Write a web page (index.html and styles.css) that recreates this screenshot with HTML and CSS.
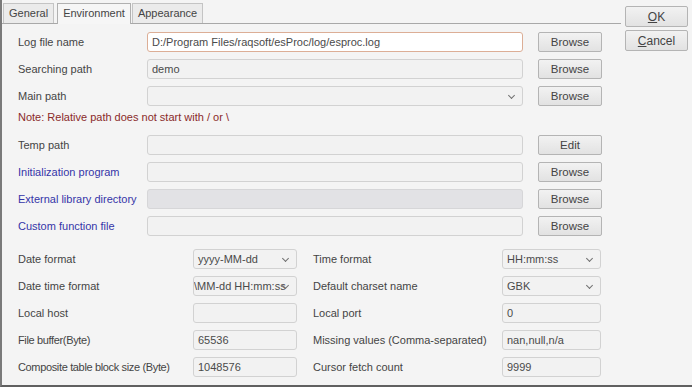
FILE: index.html
```html
<!DOCTYPE html>
<html lang="en">
<head>
  <meta charset="UTF-8" />
  <title>Options</title>
  <link rel="stylesheet" href="styles.css">
</head>
<body>

  <div class="dialog">
    <div class="tabpane">
      <div class="tabs">
        <span class="tab">General</span>
        <span class="tab active">Environment</span>
        <span class="tab">Appearance</span>
      </div>

      <div class="panel">
        <!-- Path settings -->
        <div class="paths">
          <div class="row">
            <label>Log file name</label>
            <div class="field focus">D:/Program Files/raqsoft/esProc/log/esproc.log</div>
            <button class="btn">Browse</button>
          </div>
          <div class="row">
            <label>Searching path</label>
            <div class="field">demo</div>
            <button class="btn">Browse</button>
          </div>
          <div class="row">
            <label>Main path</label>
            <div class="field combo"></div>
            <button class="btn">Browse</button>
          </div>
          <div class="note">Note: Relative path does not start with / or \</div>
          <div class="row">
            <label>Temp path</label>
            <div class="field"></div>
            <button class="btn">Edit</button>
          </div>
          <div class="row">
            <label class="link">Initialization program</label>
            <div class="field"></div>
            <button class="btn">Browse</button>
          </div>
          <div class="row">
            <label class="link">External library directory</label>
            <div class="field disabled"></div>
            <button class="btn">Browse</button>
          </div>
          <div class="row">
            <label class="link">Custom function file</label>
            <div class="field"></div>
            <button class="btn">Browse</button>
          </div>
        </div>

        <!-- Format settings -->
        <div class="formats">
          <label>Date format</label>
          <div class="field combo">yyyy-MM-dd</div>
          <label>Time format</label>
          <div class="field combo">HH:mm:ss</div>

          <label>Date time format</label>
          <div class="field combo clip">\MM-dd HH:mm:ss</div>
          <label>Default charset name</label>
          <div class="field combo">GBK</div>

          <label>Local host</label>
          <div class="field"></div>
          <label>Local port</label>
          <div class="field">0</div>

          <label class="tight">File buffer(Byte)</label>
          <div class="field">65536</div>
          <label>Missing values (Comma-separated)</label>
          <div class="field">nan,null,n/a</div>

          <label class="tight">Composite table block size (Byte)</label>
          <div class="field">1048576</div>
          <label>Cursor fetch count</label>
          <div class="field">9999</div>
        </div>
      </div>
    </div>

    <div class="actions">
      <button class="btn big"><u>O</u>K</button>
      <button class="btn big"><u>C</u>ancel</button>
    </div>
  </div>

</body>
</html>
```

FILE: styles.css
```css
* {
  margin: 0;
  padding: 0;
  box-sizing: border-box;
}

html, body {
  height: 100%;
  overflow: hidden;
}

body {
  background: #f4f4f4;
  color: #3c3c3c;
  font-family: 'Liberation Sans', Arial, sans-serif;
  font-size: 11px;
}

.dialog {
  height: 387px;
  display: flex;
  border-left: 2px solid #7a7a7a;
  border-bottom: 2px solid #606060;
}

.tabpane {
  width: 619px;
  display: flex;
  flex-direction: column;
}

.tabs {
  display: flex;
  height: 23px;
  padding: 3px 0 0 1px;
  gap: 2px;
  align-items: flex-end;
}

.tab {
  height: 20px;
  line-height: 18px;
  padding: 0 5px;
  border: 1px solid #c4c4c4;
  border-bottom: none;
  background: #ebebeb;
  color: #444444;
  font-size: 11px;
}

.tab.active {
  height: 21px;
  padding: 0 5px;
  margin: 0 -1px -1px 1px;
  background: #f6f6f6;
  border-color: #b0b0b0;
  position: relative;
}

.panel {
  flex: 1;
  border-top: 1px solid #a8a8a8;
  padding: 8px 0 0 16px;
}

.paths {
  display: flex;
  flex-direction: column;
  gap: 7px;
}

.row {
  display: flex;
  align-items: center;
  height: 20px;
}

.row label {
  width: 129px;
}

.row .field {
  width: 376px;
  margin-right: 15px;
}

label {
  color: #444444;
  white-space: nowrap;
}

label.link {
  color: #3434a8;
}

label.tight {
  letter-spacing: -0.35px;
}

.note {
  color: #8a2a2a;
  height: 15px;
  line-height: 15px;
  margin: -3px 0 3px;
}

.field {
  height: 20px;
  line-height: 18px;
  padding: 0 4px;
  border: 1px solid #d2d2d2;
  border-radius: 3px;
  background: #f2f2f2;
  color: #4a4a4a;
  white-space: nowrap;
  overflow: hidden;
  position: relative;
}

.field.focus {
  background: #ffffff;
  border-color: #dcae96;
}

.field.disabled {
  background: #e2e2e5;
  border-color: #d6d6d8;
}

.field.combo {
  padding-right: 20px;
}

.field.combo::after {
  content: "";
  position: absolute;
  right: 8px;
  top: 6px;
  width: 4px;
  height: 4px;
  border-right: 1.5px solid #707070;
  border-bottom: 1.5px solid #707070;
  transform: rotate(45deg);
}

.field.clip {
  text-indent: -4px;
}

.btn {
  width: 64px;
  height: 20px;
  font-family: inherit;
  font-size: 11.5px;
  color: #444444;
  background: linear-gradient(#f2f2f2, #e2e2e2);
  border: 1px solid #b4b4b4;
  border-radius: 2px;
}

.formats {
  display: grid;
  grid-template-columns: 175px 104px 16px 189px 99px;
  grid-auto-rows: 20px;
  row-gap: 7px;
  margin-top: 13px;
  align-items: center;
}

.formats label:nth-of-type(even) {
  grid-column: 4;
}

.actions {
  display: flex;
  flex-direction: column;
  gap: 3px;
  padding: 6px 0 0 4px;
}

.btn.big {
  width: 63px;
  height: 21px;
  font-size: 12px;
}
```
